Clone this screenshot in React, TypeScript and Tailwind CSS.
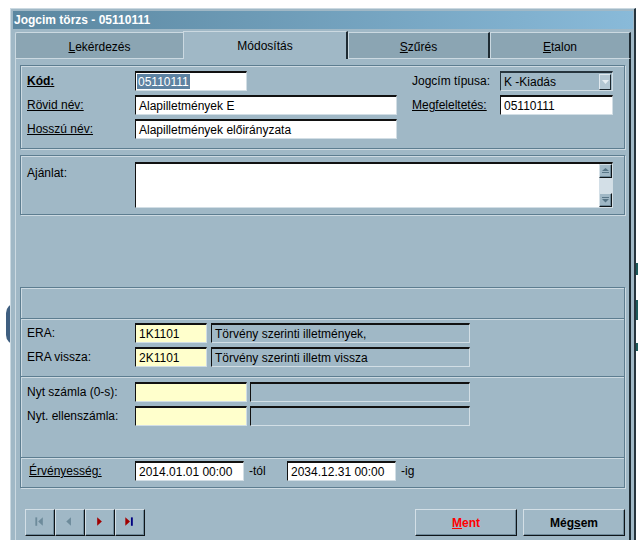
import React from "react";

const whiteField =
  "h-[20px] shrink-0 bg-white border-t-2 border-l border-b border-r border-t-[#111] border-l-[#111] border-b-[#d2dee5] border-r-[#d2dee5] flex items-center pl-[3px] whitespace-nowrap overflow-hidden";
const yellowField =
  "h-[20px] shrink-0 bg-[#ffffcc] border-t-2 border-l border-b border-r border-t-[#111] border-l-[#111] border-b-[#d2dee5] border-r-[#d2dee5] flex items-center pl-[3px] whitespace-nowrap overflow-hidden";
const grayField =
  "h-[20px] shrink-0 bg-[#a0b8c6] border-t-2 border-l border-b border-r border-t-[#111] border-l-[#111] border-b-[#d2dee5] border-r-[#d2dee5] flex items-center pl-[3px] whitespace-nowrap overflow-hidden";
const groupBox =
  "w-[605px] shrink-0 border border-[#5d7d90] shadow-[inset_1px_1px_0_#cddae2,1px_1px_0_#cddae2]";
const sectionSep =
  "border-t border-t-[#5d7d90] shadow-[inset_0_1px_0_#cddae2]";
const raised =
  "shrink-0 bg-[#a0b8c6] border border-t-[#d3dfe6] border-l-[#d3dfe6] border-b-[#0e1418] border-r-[#0e1418] shadow-[inset_-1px_-1px_0_#6f8a9a]";

function L({ children, className = "" }: { children: React.ReactNode; className?: string }) {
  return <div className={"flex items-center h-[20px] shrink-0 whitespace-nowrap " + className}>{children}</div>;
}

export default function App() {
  return (
    <div className="relative w-[638px] h-[540px] overflow-hidden bg-white font-['Liberation_Sans',Arial,sans-serif] text-[12px] leading-none text-black">
      <div className="absolute left-[6px] top-[303px] w-[10px] h-[42px] rounded-l-full bg-[#3f5f80]" />
      <div className="absolute left-[636px] top-[263px] w-[2px] h-[12px] bg-[#1d5a5a]" />
      <div className="absolute left-[636px] top-[300px] w-[2px] h-[20px] bg-[#1d5a5a]" />
      <div className="absolute left-[636px] top-[343px] w-[2px] h-[8px] bg-[#1d5a5a]" />

      <div className="relative ml-[10px] mt-[8px] w-[626px] h-[560px] bg-[#a0b8c6] border-l border-t border-r-2 border-l-[#cbd9e1] border-t-[#cbd9e1] border-r-[#26343d] pl-[2px] pr-[1px] pt-[2px] flex flex-col">
        {/* title */}
        <div className="h-[18px] shrink-0 flex items-center pl-[1px] bg-linear-to-r from-[#5b87a0] to-[#89bad9] text-white font-bold text-[12px]">
          Jogcim törzs - 05110111
        </div>

        {/* tabs */}
        <div className="relative z-10 mt-[2px] ml-[2px] flex h-[27px] w-[616px] shrink-0">
          <div className="mt-[1px] h-[26px] w-[168px] bg-[#8ba5b3] border-t border-l border-t-[#cbd9e1] border-l-[#cbd9e1] rounded-tl-[2px] flex items-center justify-center pt-[2px]">
            <span>
              <span className="underline">L</span>ekérdezés
            </span>
          </div>
          <div className="h-[28px] w-[165px] bg-[#a0b8c6] border-t border-l border-r-2 border-t-[#cbd9e1] border-l-[#cbd9e1] border-r-[#1e2b33] flex items-center justify-center">
            Módosítás
          </div>
          <div className="mt-[1px] h-[26px] w-[142px] bg-[#8ba5b3] border-t border-l border-r-2 border-t-[#cbd9e1] border-l-[#cbd9e1] border-r-[#1e2b33] flex items-center justify-center pt-[2px]">
            <span>
              <span className="underline">S</span>zűrés
            </span>
          </div>
          <div className="mt-[1px] h-[26px] w-[141px] bg-[#8ba5b3] border-t border-l border-r-2 border-t-[#cbd9e1] border-l-[#cbd9e1] border-r-[#1e2b33] flex items-center justify-center pt-[2px]">
            <span>
              <span className="underline">E</span>talon
            </span>
          </div>
        </div>

        {/* page */}
        <div className="ml-[2px] w-[616px] flex-1 border-t border-l border-r-2 border-t-[#cbd9e1] border-l-[#cbd9e1] border-r-[#1e2b33] pl-[4px] pt-[6px] flex flex-col">
          {/* group 1 */}
          <div className={groupBox + " h-[84px] pl-[6px] pt-[5px] flex"}>
            <div className="w-[385px] shrink-0 flex flex-col gap-[4px]">
              <div className="flex">
                <L className="w-[108px] font-bold underline">Kód:</L>
                <div className={whiteField + " w-[112px] !pl-[1px]"}>
                  <span className="bg-[#5d82a1] text-white h-[15px] flex items-center px-[1px]">05110111</span>
                </div>
              </div>
              <div className="flex">
                <L className="w-[108px] underline">Rövid név:</L>
                <div className={whiteField + " w-[262px]"}>Alapilletmények E</div>
              </div>
              <div className="flex">
                <L className="w-[108px] underline">Hosszú név:</L>
                <div className={whiteField + " w-[262px]"}>Alapilletmények előirányzata</div>
              </div>
            </div>
            <div className="flex flex-col gap-[4px]">
              <div className="flex">
                <L className="w-[88px]">Jogcím típusa:</L>
                <div className="h-[20px] w-[113px] shrink-0 border-t-2 border-l border-b border-r border-t-[#26343d] border-l-[#26343d] border-b-[#d2dee5] border-r-[#d2dee5] flex items-center pl-[3px]">
                  <span className="flex-1">K -Kiadás</span>
                  <div className="mr-[1px] w-[12px] h-[16px] bg-[#b3c7d3] border border-t-[#dfe8ee] border-l-[#dfe8ee] border-b-[#1a252c] border-r-[#1a252c] flex items-center justify-center">
                    <svg width="7" height="4" viewBox="0 0 7 4">
                      <path d="M0 0 L7 0 L3.5 4 Z" fill="#e6eef3" />
                    </svg>
                  </div>
                </div>
              </div>
              <div className="flex">
                <L className="w-[88px] underline">Megfeleltetés:</L>
                <div className={whiteField + " w-[113px]"}>05110111</div>
              </div>
            </div>
          </div>

          {/* group 2 */}
          <div className={groupBox + " mt-[6px] h-[60px] pl-[6px] pt-[6px] flex"}>
            <div className="w-[108px] shrink-0 pt-[5px]">Ajánlat:</div>
            <div className="w-[478px] h-[46px] shrink-0 bg-white border-t-2 border-l border-b border-r border-t-[#111] border-l-[#111] border-b-[#d2dee5] border-r-[#d2dee5] flex justify-end">
              <div className="w-[13px] flex flex-col">
                <div className={raised + " h-[14px] flex flex-col items-center justify-center gap-[1px]"}>
                  <svg width="7" height="6" viewBox="0 0 7 6">
                    <path d="M3.5 0 L7 3 L0 3 Z" fill="#587687" />
                    <rect x="0" y="4" width="7" height="1" fill="#587687" />
                  </svg>
                </div>
                <div className="flex-1 bg-[#d3dfe7]" />
                <div className={raised + " h-[14px] flex flex-col items-center justify-center"}>
                  <svg width="7" height="6" viewBox="0 0 7 6">
                    <rect x="0" y="0" width="7" height="1" fill="#587687" />
                    <path d="M0 2 L7 2 L3.5 5.5 Z" fill="#587687" />
                  </svg>
                </div>
              </div>
            </div>
          </div>

          {/* stacked groups */}
          <div className={groupBox + " mt-[72px] flex flex-col"}>
            <div className="h-[30px]" />
            <div className={sectionSep + " h-[58px] pl-[6px] pt-[4px] flex flex-col gap-[4px]"}>
              <div className="flex">
                <L className="w-[108px]">ERA:</L>
                <div className={yellowField + " w-[72px]"}>1K1101</div>
                <div className={grayField + " ml-[4px] w-[259px]"}>Törvény szerinti illetmények,</div>
              </div>
              <div className="flex">
                <L className="w-[108px]">ERA vissza:</L>
                <div className={yellowField + " w-[72px]"}>2K1101</div>
                <div className={grayField + " ml-[4px] w-[259px]"}>Törvény szerinti illetm vissza</div>
              </div>
            </div>
            <div className={sectionSep + " h-[81px] pl-[6px] pt-[5px] flex flex-col gap-[4px]"}>
              <div className="flex">
                <L className="w-[108px]">Nyt számla (0-s):</L>
                <div className={yellowField + " w-[112px]"} />
                <div className={grayField + " ml-[3px] w-[220px]"} />
              </div>
              <div className="flex">
                <L className="w-[108px]">Nyt. ellenszámla:</L>
                <div className={yellowField + " w-[112px]"} />
                <div className={grayField + " ml-[3px] w-[220px]"} />
              </div>
            </div>
            <div className={sectionSep + " h-[30px] pl-[6px] pt-[3px] flex"}>
              <L className="w-[108px] pl-[2px] underline">Érvényesség:</L>
              <div className={whiteField + " w-[109px]"}>2014.01.01 00:00</div>
              <L className="w-[43px] pl-[5px]">-tól</L>
              <div className={whiteField + " w-[109px]"}>2034.12.31 00:00</div>
              <L className="pl-[5px]">-ig</L>
            </div>
          </div>

          {/* buttons */}
          <div className="mt-[21px] w-[605px] flex">
            <div className="ml-[5px] flex">
              <div className={raised + " w-[30px] h-[27px] flex items-center justify-center"}>
                <svg width="30" height="27" viewBox="0 0 30 27">
                  <rect x="10" y="8" width="2" height="9" fill="#6d8b9b" />
                  <path d="M13 12.5 L18 8 L18 17 Z" fill="#6d8b9b" />
                </svg>
              </div>
              <div className={raised + " w-[30px] h-[27px] flex items-center justify-center"}>
                <svg width="30" height="27" viewBox="0 0 30 27">
                  <path d="M11 12.5 L16 8 L16 17 Z" fill="#6d8b9b" />
                </svg>
              </div>
              <div className={raised + " w-[30px] h-[27px] flex items-center justify-center"}>
                <svg width="30" height="27" viewBox="0 0 30 27">
                  <path d="M12 8 L17 12.5 L12 17 Z" fill="#a00000" />
                </svg>
              </div>
              <div className={raised + " w-[30px] h-[27px] flex items-center justify-center"}>
                <svg width="30" height="27" viewBox="0 0 30 27">
                  <path d="M10 8 L15 12.5 L10 17 Z" fill="#a00000" />
                  <rect x="16" y="8" width="2" height="9" fill="#000080" />
                </svg>
              </div>
            </div>
            <div className={raised + " ml-auto w-[102px] h-[27px] flex items-center justify-center font-bold text-[#ff0000]"}>
              <span>
                <span className="underline">M</span>ent
              </span>
            </div>
            <div className={raised + " ml-[6px] w-[102px] h-[27px] flex items-center justify-center font-bold"}>
              <span>
                Még<span className="underline">s</span>em
              </span>
            </div>
          </div>
        </div>
      </div>
    </div>
  );
}
